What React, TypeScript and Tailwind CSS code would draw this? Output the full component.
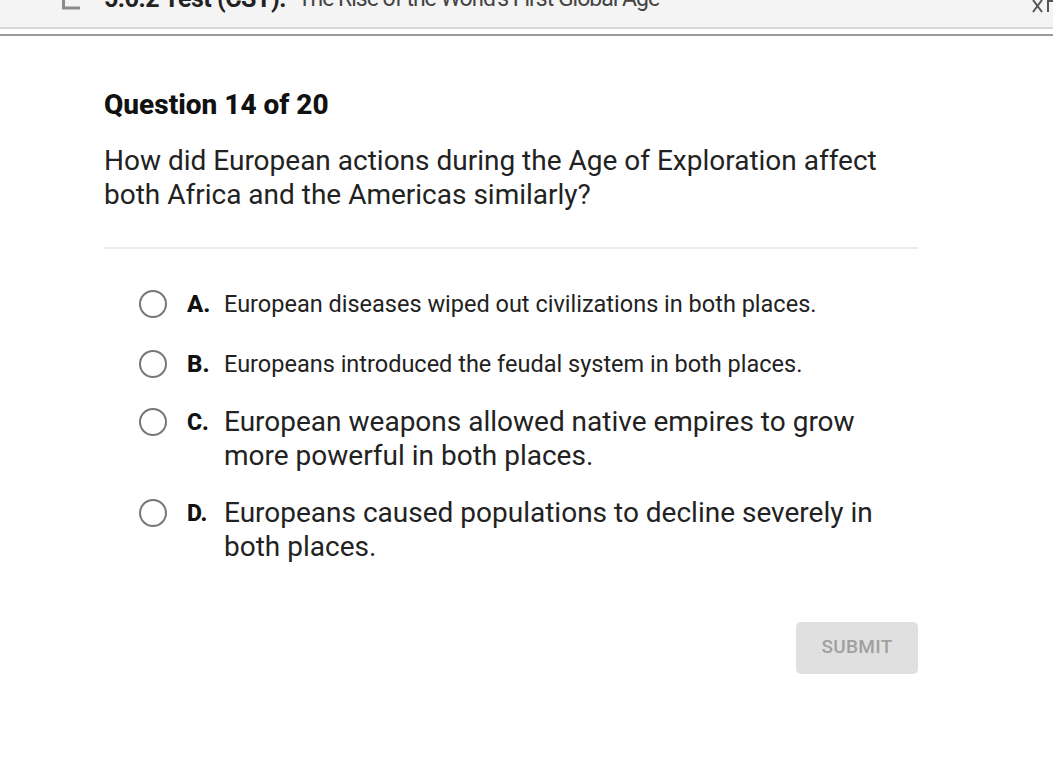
import React from 'react';

interface Choice {
  letter: string;
  text: string;
  big?: boolean;
}

const choices: Choice[] = [
  { letter: 'A.', text: 'European diseases wiped out civilizations in both places.' },
  { letter: 'B.', text: 'Europeans introduced the feudal system in both places.' },
  { letter: 'C.', text: 'European weapons allowed native empires to grow more powerful in both places.', big: true },
  { letter: 'D.', text: 'Europeans caused populations to decline severely in both places.', big: true },
];

const Radio = () => (
  <span className="block w-[28px] h-[28px] rounded-full border-[2.5px] border-[#777777] shrink-0 bg-white" />
);

const App: React.FC = () => {
  return (
    <div className="w-[1053px] h-[780px] bg-white overflow-hidden" style={{ fontFamily: 'Roboto, "Liberation Sans", sans-serif' }}>
      {/* header bar, scrolled mostly out of view */}
      <div className="h-[29px] bg-[#f4f4f4] border-b-2 border-[#d6d6d6] relative overflow-hidden">
        <div className="flex items-end h-full pl-[62px] pb-[16px]">
          <svg width="18" height="24" viewBox="0 0 18 24" className="shrink-0 -mb-[7px]">
            <path d="M1.5 0 V14 H18" fill="none" stroke="#8a8a8a" strokeWidth="3" />
          </svg>
          <span className="ml-[24px] text-[25px] leading-[25px] font-bold text-[#222222] tracking-[-0.5px] whitespace-nowrap">5.6.2 Test (CST):</span>
          <span className="ml-[12px] text-[23px] leading-[25px] text-[#444444] tracking-[-1px] whitespace-nowrap">The Rise of the World's First Global Age</span>
        </div>
        <svg width="24" height="14" viewBox="0 0 24 14" className="absolute right-0 top-0">
          <path d="M4 0 L13 12 M13 0 L4 12" fill="none" stroke="#555555" strokeWidth="2" />
          <path d="M19 0 L19 12 M19 1 H24" fill="none" stroke="#555555" strokeWidth="2" />
        </svg>
      </div>
      <div className="mt-[5px] h-[1.5px] bg-[#9a9a9a]" />

      <div className="ml-[104px] w-[814px]">
        <h1 className="mt-[54px] text-[28px] leading-[30px] font-extrabold text-[#111111]">Question 14 of 20</h1>
        <p className="mt-[24px] text-[28px] leading-[34px] text-[#222222]">
          How did European actions during the Age of Exploration affect both Africa and the Americas similarly?
        </p>
        <div className="mt-[35px] h-[2px] bg-[#ececec]" />

        <div className="mt-[40px] pl-[35px] flex flex-col">
          {choices.map((c, i) => (
            <div
              key={c.letter}
              className={`flex items-start ${i === 0 ? '' : c.big ? (i === 2 ? 'mt-[26px]' : 'mt-[23px]') : 'mt-[30px]'}`}
            >
              <div className={c.big ? 'pt-[3px]' : 'pt-[1px]'}>
                <Radio />
              </div>
              <div className="ml-[20px] flex items-start">
                <span
                  className={`w-[37px] shrink-0 font-extrabold text-[#111111] ${c.big ? 'text-[23px] leading-[34px] pt-[1px]' : 'text-[24px] leading-[30px]'}`}
                >
                  {c.letter}
                </span>
                <span className={`text-[#222222] ${c.big ? 'text-[28px] leading-[34px] max-w-[660px]' : 'text-[23.5px] leading-[30px] whitespace-nowrap'}`}>
                  {c.text}
                </span>
              </div>
            </div>
          ))}
        </div>

        <div className="mt-[58px] flex justify-end">
          <button className="w-[122px] h-[52px] rounded-[5px] bg-[#e0e0e0] text-[#a0a0a0] text-[19px] font-medium tracking-[0.3px]">
            SUBMIT
          </button>
        </div>
      </div>
    </div>
  );
};

export default App;
